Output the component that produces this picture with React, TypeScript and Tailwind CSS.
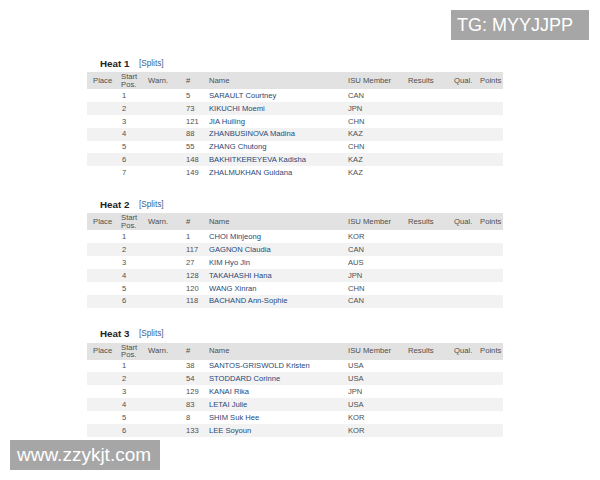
import { FC } from "react";

type Skater = { pos: number; num: number; name: string; nat: string };

const heats: { title: string; mt: string; skaters: Skater[] }[] = [
  {
    title: "Heat 1",
    mt: "mt-[56px]",
    skaters: [
      { pos: 1, num: 5, name: "SARAULT Courtney", nat: "CAN" },
      { pos: 2, num: 73, name: "KIKUCHI Moemi", nat: "JPN" },
      { pos: 3, num: 121, name: "JIA Huiling", nat: "CHN" },
      { pos: 4, num: 88, name: "ZHANBUSINOVA Madina", nat: "KAZ" },
      { pos: 5, num: 55, name: "ZHANG Chutong", nat: "CHN" },
      { pos: 6, num: 148, name: "BAKHITKEREYEVA Kadisha", nat: "KAZ" },
      { pos: 7, num: 149, name: "ZHALMUKHAN Guldana", nat: "KAZ" },
    ],
  },
  {
    title: "Heat 2",
    mt: "mt-[18px]",
    skaters: [
      { pos: 1, num: 1, name: "CHOI Minjeong", nat: "KOR" },
      { pos: 2, num: 117, name: "GAGNON Claudia", nat: "CAN" },
      { pos: 3, num: 27, name: "KIM Hyo Jin", nat: "AUS" },
      { pos: 4, num: 128, name: "TAKAHASHI Hana", nat: "JPN" },
      { pos: 5, num: 120, name: "WANG Xinran", nat: "CHN" },
      { pos: 6, num: 118, name: "BACHAND Ann-Sophie", nat: "CAN" },
    ],
  },
  {
    title: "Heat 3",
    mt: "mt-[19px]",
    skaters: [
      { pos: 1, num: 38, name: "SANTOS-GRISWOLD Kristen", nat: "USA" },
      { pos: 2, num: 54, name: "STODDARD Corinne", nat: "USA" },
      { pos: 3, num: 129, name: "KANAI Rika", nat: "JPN" },
      { pos: 4, num: 83, name: "LETAI Julie", nat: "USA" },
      { pos: 5, num: 8, name: "SHIM Suk Hee", nat: "KOR" },
      { pos: 6, num: 133, name: "LEE Soyoun", nat: "KOR" },
    ],
  },
];

const cols =
  "grid grid-cols-[30px_27px_36px_25px_139px_60px_46px_26px_27px]";

const HeatTable: FC<{ title: string; mt: string; skaters: Skater[] }> = ({
  title,
  mt,
  skaters,
}) => (
  <div className={`flex flex-col ${mt}`}>
    <div className="h-[16px] flex items-center pl-[13px]">
      <span className="text-[9.8px] font-bold text-[#222] w-[39px]">
        {title}
      </span>
      <span className="text-[8.2px] text-[#3b5d8f]">[Splits]</span>
    </div>
    <div className={`${cols} h-[17px] bg-[#e2e2e2] items-center text-[7.7px] text-[#4f4f4f]`}>
      <span className="pl-[6px]">Place</span>
      <span className="pl-[4px] leading-[7.5px]">
        Start
        <br />
        Pos.
      </span>
      <span className="pl-[4px]">Warn.</span>
      <span className="pl-[6px]">#</span>
      <span className="pl-[4px]">Name</span>
      <span className="pl-[4px]">ISU Member</span>
      <span className="pl-[4px]">Results</span>
      <span className="pl-[4px]">Qual.</span>
      <span className="pl-[4px]">Points</span>
    </div>
    {skaters.map((s, i) => (
      <div
        key={s.num}
        className={`${cols} h-[12.9px] items-center text-[7.6px] text-[#4f4f4f] ${
          i % 2 === 1 ? "bg-[#f2f2f2]" : "bg-white"
        }`}
      >
        <span />
        <span className="pl-[5px]">{s.pos}</span>
        <span />
        <span className="pl-[6px]">{s.num}</span>
        <span className="pl-[4px] text-[#284878] whitespace-nowrap">
          {s.name}
        </span>
        <span className="pl-[4px]">{s.nat}</span>
        <span />
        <span />
        <span />
      </div>
    ))}
  </div>
);

const App: FC = () => {
  return (
    <div className="relative w-[600px] h-[480px] bg-white overflow-hidden font-['Liberation_Sans',Arial,sans-serif]">
      <div className="flex flex-col pl-[87px] w-[503px]">
        {heats.map((h) => (
          <HeatTable key={h.title} {...h} />
        ))}
      </div>
      <div className="absolute left-[451px] top-[10px] w-[138px] h-[30px] bg-[#a6a6a6] flex items-center pl-[6px] text-white text-[18px]">
        TG: MYYJJPP
      </div>
      <div className="absolute left-[10px] top-[440px] w-[150px] h-[30px] bg-[#a6a6a6] flex items-center pl-[7px] text-white text-[19px]">
        www.zzykjt.com
      </div>
    </div>
  );
};

export default App;
